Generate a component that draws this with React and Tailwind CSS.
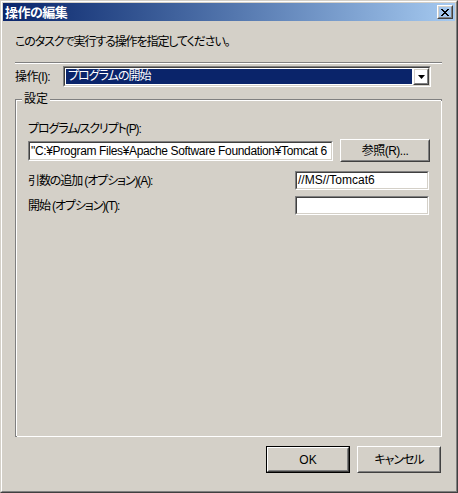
import React from "react";

const font = "[font-family:'Liberation_Sans','Noto_Sans_CJK_JP',sans-serif] [font-feature-settings:'palt']";

const Sunken = ({ className = "", children }) => (
  <div className={`border border-t-[#808080] border-l-[#808080] border-r-white border-b-white ${className}`}>
    <div className="h-full border border-t-[#404040] border-l-[#404040] border-r-[#d4d0c8] border-b-[#d4d0c8] bg-white">
      {children}
    </div>
  </div>
);

const Button = ({ className = "", children, def }) => (
  <div className={`${def ? "border border-black" : ""} ${className}`}>
    <div className="h-full border border-t-white border-l-white border-r-[#404040] border-b-[#404040]">
      <div className="h-full flex items-center justify-center border border-t-[#d4d0c8] border-l-[#d4d0c8] border-r-[#808080] border-b-[#808080] text-black text-[12px]">
        {children}
      </div>
    </div>
  </div>
);

export default function App() {
  return (
    <div className={`w-[458px] h-[493px] ${font}`}>
      <div className="h-full border border-t-[#d4d0c8] border-l-[#d4d0c8] border-r-[#404040] border-b-[#404040]">
        <div className="h-full flex flex-col bg-[#d4d0c8] border border-t-white border-l-white border-r-[#808080] border-b-[#808080] p-px">
          {/* title bar */}
          <div className="h-[18px] flex items-center justify-between pl-[2px] pr-[2px] bg-gradient-to-r from-[#0a246a] to-[#a6caf0]">
            <span className="text-white font-bold text-[13px] leading-none tracking-[-0.5px]">操作の編集</span>
            <Button className="w-[16px] h-[14px]">
              <svg width="8" height="7" viewBox="0 0 8 7">
                <path d="M0 0h2v1h1v1h2V1h1V0h2v1H7v1H6v1H5v1h1v1h1v1h1v1H6V6H5V5H3v1H2v1H0V6h1V5h1V4h1V3H2V2H1V1H0z" fill="#000" />
              </svg>
            </Button>
          </div>

          <div className="flex-1 flex flex-col pl-[12px] pr-[12px] text-[12px] text-black">
            <p className="mt-[14px] leading-[14px] tracking-[-1.1px]">このタスクで実行する操作を指定してください。</p>

            <div className="mt-[13px] w-[427px] border-t border-t-[#808080] border-b border-b-white" />

            <div className="mt-[2px] flex items-center h-[21px]">
              <span className="w-[48px] tracking-[-0.6px]">操作(I):</span>
              <Sunken className="w-[368px] h-[21px]">
                <div className="h-full flex items-stretch">
                  <div className="flex-1 m-px bg-[#0a246a] text-white leading-[15px] pl-[2px] tracking-[-1px]">プログラムの開始</div>
                  <Button className="w-[16px]">
                    <svg width="7" height="4" viewBox="0 0 7 4">
                      <path d="M0 0h7L3.5 4z" fill="#000" />
                    </svg>
                  </Button>
                </div>
              </Sunken>
            </div>

            {/* group box */}
            <div className="relative mt-[12px] w-[427px] h-[338px] border border-[#808080]">
              <div className="h-full border-t border-l border-t-white border-l-white flex flex-col pl-[11px] pr-[11px] shadow-[1px_1px_0_white]">
                <span className="absolute -top-[9px] left-[6px] px-[2px] bg-[#d4d0c8] leading-[16px]">設定</span>

                <p className="mt-[20px] leading-[16px] tracking-[-1.1px]">プログラム/スクリプト(P):</p>
                <div className="mt-[2px] flex items-center">
                  <Sunken className="w-[305px] h-[20px]">
                    <div className="h-full overflow-hidden whitespace-nowrap leading-[16px] pl-[1px] tracking-[-0.35px]">"C:¥Program Files¥Apache Software Foundation¥Tomcat 6</div>
                  </Sunken>
                  <Button className="ml-[7px] w-[90px] h-[23px]"><span className="tracking-[-0.5px]">参照(R)...</span></Button>
                </div>

                <div className="mt-[9px] flex items-center justify-between pr-[1px]">
                  <span className="tracking-[-1.1px]">引数の追加 (オプション)(A):</span>
                  <Sunken className="w-[134px] h-[19px]">
                    <div className="h-full leading-[15px] pl-[1px]">//MS//Tomcat6</div>
                  </Sunken>
                </div>
                <div className="mt-[6px] flex items-center justify-between pr-[1px]">
                  <span className="tracking-[-1.1px]">開始 (オプション)(T):</span>
                  <Sunken className="w-[134px] h-[19px]" />
                </div>
              </div>
            </div>

            <div className="mt-[9px] flex justify-end gap-[7px] pr-[2px]">
              <Button def className="w-[84px] h-[27px]">OK</Button>
              <Button className="w-[84px] h-[27px]"><span className="tracking-[-1px]">キャンセル</span></Button>
            </div>
          </div>
        </div>
      </div>
    </div>
  );
}
